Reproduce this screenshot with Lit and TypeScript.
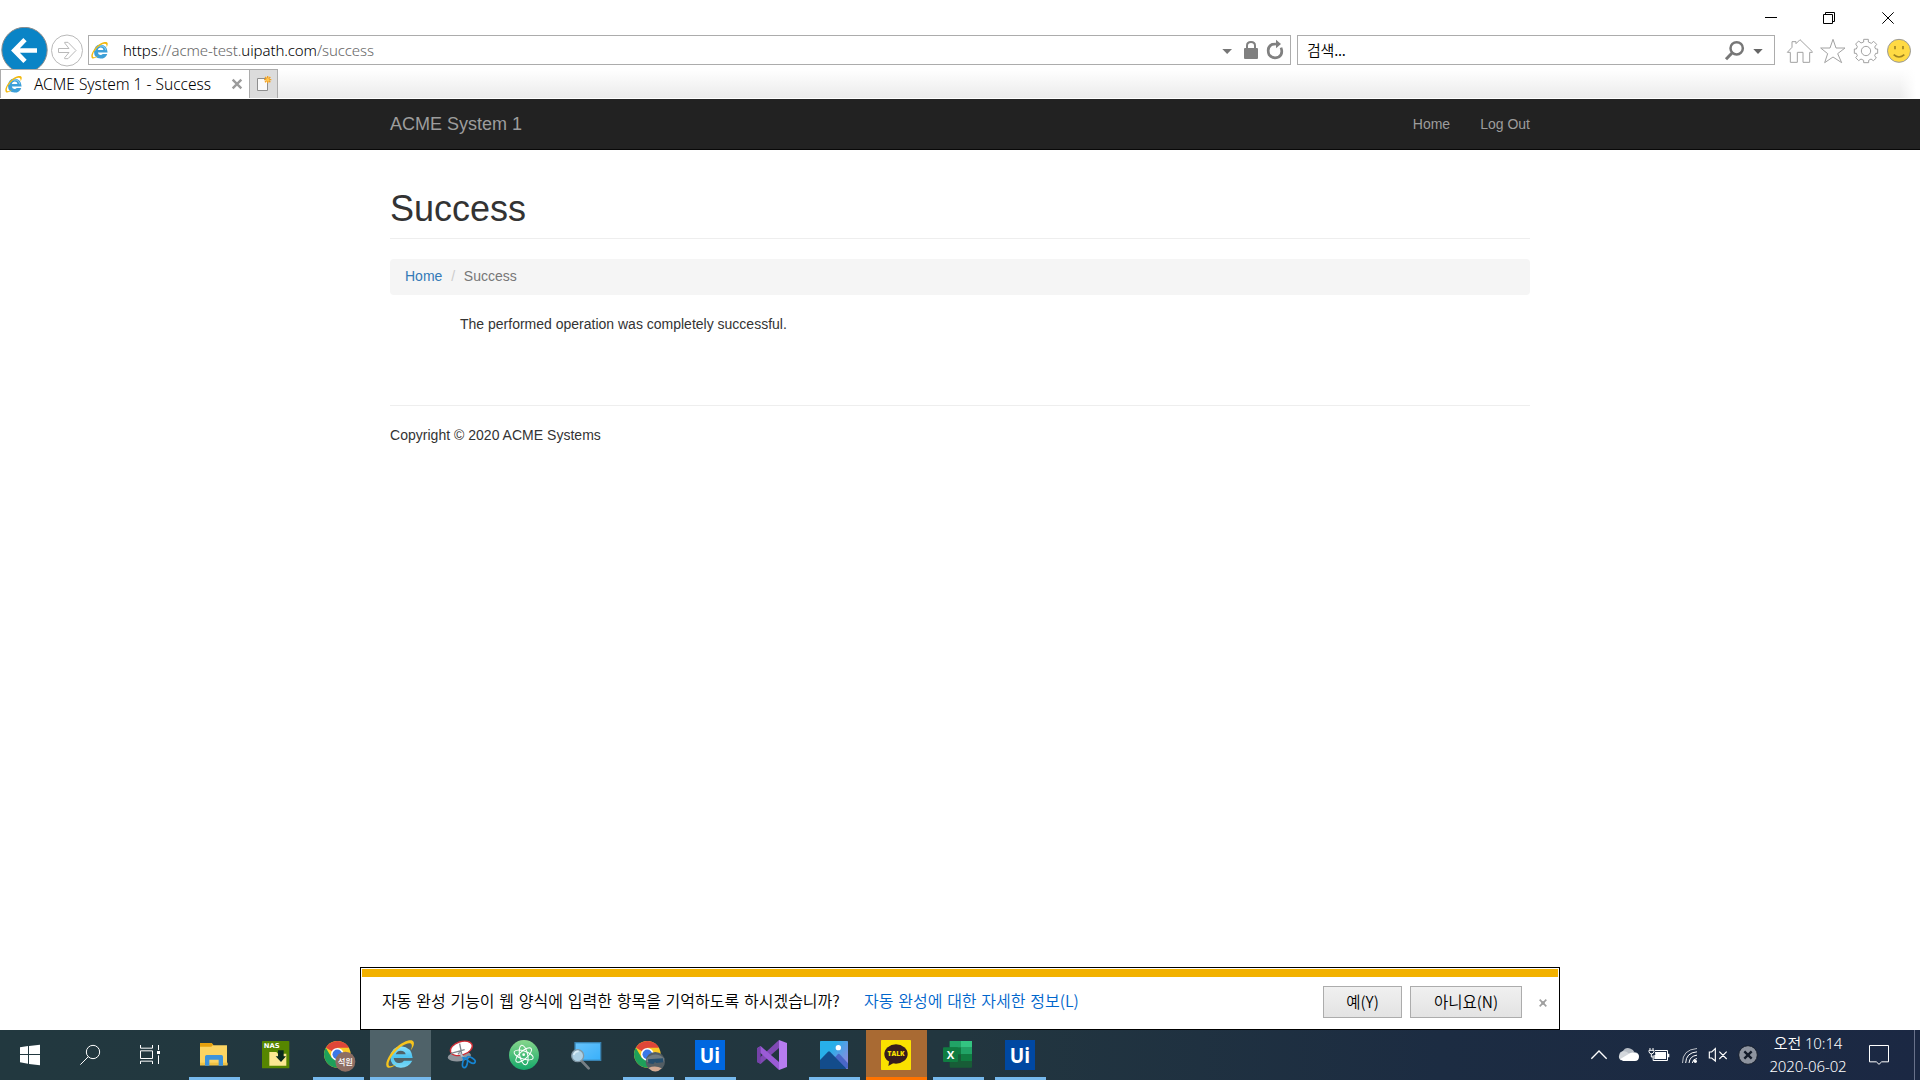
import { LitElement, html, svg, css, nothing } from "lit";
import { customElement } from "lit/decorators.js";

type Art = ReturnType<typeof svg>;

// Icons are drawn on a grid of three units per pixel.
const icon = (x: number, y: number, w: number, h: number, art: Art) => html`
  <svg width=${w} height=${h} viewBox="${x} ${y} ${w * 3} ${h * 3}">${art}</svg>`;

const ieArt = svg`
  <path d="M64 54H26Q29 70 43 69Q53 69 57 62H82Q70 84 46 83Q16 80 16 51Q18 21 48 19Q80 21 83 54Z M32 43H62Q60 32 47 32Q35 33 32 43Z" fill="url(#ieg)" fill-rule="evenodd"/>
  <path d="M9 83C-4 77 8 46 33 23C56 2 82 -5 86 6C89 14 83 24 77 31C82 20 82 11 75 10C65 8 45 20 31 35C15 52 6 73 13 78C18 80 28 76 36 71C26 80 15 85 9 83Z" fill="#f7c41d"/>`;

const ieSmall = html`
  <svg width="17" height="17" viewBox="0 0 90 90">
    <path d="M88 56H36Q38 69 50 69Q58 69 62 63H86Q78 88 50 88Q16 85 16 52Q18 15 50 13Q86 15 88 56Z M36 42H66Q64 29 51 29Q38 30 36 42Z" fill="#3c9fd8" fill-rule="evenodd"/>
    <path d="M22 45Q27 21 50 20Q72 21 79 43" fill="none" stroke="#8accf0" stroke-width="6"/>
    <path d="M7 87C-6 80 6 46 33 21C56 0 84 -7 88 6C90 14 87 22 82 29C84 18 82 9 74 9C64 8 45 18 29 34C13 51 5 74 12 79C17 82 28 79 38 73C26 84 15 89 7 87Z" fill="#f2b90f"/>
  </svg>`;

const chromeArt = svg`
  <circle cx="43" cy="43" r="40" fill="#fbc926"/>
  <path d="M43 43L9 23A40 40 0 0 1 78 23H43Z" fill="#df4639"/>
  <path d="M8.400 23A40 40 0 0 0 43 83L60 53L26 53Z" fill="#1ea05a"/>
  <circle cx="43" cy="43" r="19" fill="#fff"/><circle cx="43" cy="43" r="14.500" fill="#3b78e7"/>`;

const uiArt = (bg: string) => svg`
  <rect width="90" height="90" fill=${bg}/>
  <text x="14" y="69" class="ui-logo" textLength="61" lengthAdjust="spacingAndGlyphs">Ui</text>`;

interface Task { art: Art; state: "idle" | "open" | "active" | "alert"; }

const tasks: Task[] = [
  { state: "open", art: svg`
    <path d="M3 9H37L43 16H84V76H3Z" fill="#fcd462"/>
    <path d="M3 9H38L43 14L37 20H3Z" fill="#e5a00d"/>
    <path d="M3 68H86V76H3Z" fill="#f0c243"/>
    <path d="M18 77V50Q18 45 23 45H67Q72 45 72 50V77H59V59H31V77Z" fill="#3d93db"/>` },
  { state: "idle", art: svg`
    <rect x="3" y="3" width="82" height="82" rx="2" fill="#568600"/>
    <text x="8" y="24" class="nas" textLength="48" lengthAdjust="spacingAndGlyphs">NAS</text>
    <path d="M25 36H46L51 41H76V77H25Z" fill="#fce892"/>
    <path d="M51 31H68V49H75L60 66L44 49H51Z" fill="#0a2a1e"/>` },
  { state: "open", art: svg`${chromeArt}
    <circle cx="67" cy="65" r="30" fill="#8d6e63"/>
    <text x="67" y="75" class="avatar">석원</text>` },
  { state: "active", art: ieArt },
  { state: "idle", art: svg`
    <ellipse cx="37" cy="49" rx="35" ry="15" fill="#8f959c" transform="rotate(-6 37 49)"/>
    <ellipse cx="43" cy="25" rx="34" ry="20" fill="#fff" stroke="#cf2c35" stroke-width="4" transform="rotate(-18 43 25)"/>
    <path d="M12 40L53 29M38 11L46 52M43 30L33 43" stroke="#7e838a" stroke-width="4" fill="none"/>
    <path d="M37 38L49 53" stroke="#b9bec6" stroke-width="6"/>
    <ellipse cx="54" cy="69" rx="7" ry="14" fill="none" stroke="#1685d3" stroke-width="5" transform="rotate(12 54 69)"/>
    <ellipse cx="72" cy="60" rx="7" ry="14" fill="none" stroke="#1685d3" stroke-width="5" transform="rotate(-58 72 60)"/>
    <path d="M46 52L59 57M46 52L55 58" stroke="#1685d3" stroke-width="5"/>` },
  { state: "idle", art: svg`
    <circle cx="45" cy="45" r="45" fill="url(#atom)"/>
    <g fill="none" stroke="#fff" stroke-width="3">
      <ellipse cx="44" cy="45" rx="12" ry="30" transform="rotate(-12 44 45)"/>
      <ellipse cx="44" cy="45" rx="12" ry="30" transform="rotate(48 44 45)"/>
      <ellipse cx="44" cy="45" rx="12" ry="30" transform="rotate(108 44 45)"/>
    </g><circle cx="44" cy="44" r="4" fill="#fff"/>` },
  { state: "idle", art: svg`
    <rect x="12" y="8" width="77" height="53" fill="url(#screen)" stroke="#3983b2" stroke-width="4"/>
    <path d="M32 63L53 85" stroke="#777f85" stroke-width="8" stroke-linecap="round"/>
    <circle cx="20" cy="47" r="18" fill="#acd0e4" stroke="#8298a5" stroke-width="4"/>
    <path d="M8 45Q12 33 23 34" stroke="#d9edf7" stroke-width="5" fill="none"/>` },
  { state: "open", art: svg`${chromeArt}
    <circle cx="67" cy="65" r="29" fill="#535e64"/>
    <path d="M39 57Q67 31 94 56L91 66H42Z" fill="#717c82"/>
    <path d="M45 58L90 55L91 67L70 69L66 66L61 72L46 70Z" fill="#264e6d"/>
    <path d="M46 84Q67 75 86 85Q67 105 46 84Z" fill="#d2aa93"/>` },
  { state: "open", art: uiArt("#0067df") },
  { state: "idle", art: svg`
    <path d="M66 0L90 9V81L66 90Z" fill="#b77cf0"/>
    <path d="M66 0V24L11 72L0 66V61Z" fill="#8049b4"/>
    <path d="M0 25L11 18L66 66V90L0 29Z" fill="#9b5bd6"/>
    <path d="M0 25L11 18V72L0 66Z" fill="#7542a8"/>` },
  { state: "open", art: svg`
    <rect x="3" y="3" width="84" height="84" rx="2" fill="url(#sky)"/>
    <path d="M46 54L57 42Q59 40 62 43L87 70V85H46Z" fill="#4966c7"/>
    <path d="M3 60L27 35Q30 32 33 35L83 87H3Z" fill="#134c8b"/>
    <circle cx="58" cy="23" r="8" fill="#fff"/>` },
  { state: "alert", art: svg`
    <rect width="90" height="90" rx="2" fill="#fae100"/>
    <ellipse cx="45" cy="42" rx="35" ry="29" fill="#371d1e"/>
    <path d="M25 60L22 78L43 66Z" fill="#371d1e"/>
    <text x="45" y="49" class="talk" textLength="51" lengthAdjust="spacingAndGlyphs">TALK</text>` },
  { state: "open", art: svg`
    <rect x="20" y="3" width="67" height="80" rx="3" fill="#185c37"/>
    <path d="M20 3H54V23H20Z" fill="#21a366"/><path d="M54 3H87V23H54Z" fill="#33c481"/>
    <path d="M20 23H54V43H20Z" fill="#107c41"/><path d="M54 23H87V43H54Z" fill="#21a366"/>
    <path d="M54 43H87V63H54Z" fill="#107c41"/>
    <rect x="0" y="22" width="45" height="44" rx="3" fill="#107c41"/>
    <text x="22.500" y="56" class="excel">X</text>` },
  { state: "open", art: uiArt("#0048a2") },
];

const shellFont = css`"Noto Sans", "Noto Sans CJK KR", sans-serif`;

@customElement("browser-chrome")
class BrowserChrome extends LitElement {
  static styles = css`
    :host { display: block; height: 99px; background: #fff; font: 350 15px ${shellFont}; color: #000; }
    svg { display: block; flex: none; }
    .title { height: 27px; display: flex; justify-content: flex-end; }
    .nav { height: 42px; display: flex; overflow: hidden; }
    .box { box-sizing: border-box; height: 30px; margin-top: 8px; border: 1px solid #acacac; display: flex; align-items: center; }
    .address { width: 1203px; padding-left: 2px; }
    .url { flex: 1; margin-left: 15px; color: #666; font-size: 15px; letter-spacing: -0.1px; line-height: 28px; white-space: nowrap; }
    .url b { font-weight: 350; color: #000; }
    .search { width: 478px; margin-left: 6px; padding-left: 9px; }
    .hint { flex: 1; font: 350 15px/28px "Noto Sans CJK KR", sans-serif; letter-spacing: -0.2px; }
    .tabs { height: 29px; display: flex; background: linear-gradient(#fff, #ebebeb); }
    .fade { margin-left: auto; width: 20px; background: linear-gradient(90deg, #fff0, #fff 80%); }
    .tab { box-sizing: border-box; width: 250px; border: 1px solid #acacac; border-bottom: 0; background: #fff; display: flex; align-items: center; padding-left: 4px; }
    .name { flex: 1; margin-left: 12px; font-size: 15.5px; letter-spacing: 0; white-space: nowrap; }
    .new { box-sizing: border-box; width: 28px; border: 1px solid #acacac; border-left: 0; border-bottom: 0; background: #dcdcdc; }
  `;
  render() {
    return html`
      <div class="title">${icon(600, 0, 160, 27, svg`
        <g fill="none" stroke="#000" stroke-width="3">
          <path d="M615 52.500H651M790.500 43.500H817.500V70.500H790.500ZM796.500 43V37.500H823.500V64.500H818"/>
          <path d="M967 37L1001 71M1001 37L967 71"/></g>`)}</div>
      <div class="nav">
        ${icon(0, 81, 50, 42, svg`
          <circle cx="73.500" cy="150" r="68" fill="#0a84c6" stroke="#8b8b8b" stroke-width="3"/>
          <path d="M111 151.500H44M75 119L43 151.500L75 184" fill="none" stroke="#fff" stroke-width="14"/>`)}
        ${icon(150, 81, 38, 42, svg`
          <g fill="#fff" stroke="#b9b9b9" stroke-width="3"><circle cx="201" cy="151.500" r="46.500"/>
          <path d="M175.500 145.500H207L194 129V127H204L228 151.500L204 176H194V173L207 157.500H175.500Z"/></g>`)}
        <div class="box address">${ieSmall}
          <span class="url"><b>https</b>://acme-test.<b>uipath.com</b>/success</span>
          ${icon(60, 108, 70, 28, svg`
            <path d="M67 147H96L81.500 162Z" fill="#767676"/>
            <rect x="132" y="144" width="42" height="33" rx="3" fill="#808080"/>
            <path d="M141 146V137Q141 126 153 126T165 137V146" fill="none" stroke="#808080" stroke-width="6"/>
            <path d="M243 143Q250 163 236 171Q218 178 207 164Q199 141 217 133L228 132" fill="none" stroke="#808080" stroke-width="8"/>
            <path d="M228 119L243 132L228 145Z" fill="#808080"/>`)}
        </div>
        <div class="box search"><span class="hint">검색...</span>
          ${icon(492, 108, 50, 28, svg`
            <circle cx="530" cy="145" r="18.500" fill="none" stroke="#777" stroke-width="7.500"/>
            <path d="M516 159L498 178" stroke="#777" stroke-width="9"/>
            <path d="M580 147H608L594 162Z" fill="#666"/>`)}
        </div>
        ${icon(645, 81, 145, 42, svg`
          <g fill="#fff" stroke="#a2a2a2" stroke-width="3" stroke-linejoin="round">
            <path d="M682 157L696 142V125H708V131L720 119L757 155V157H749V187H729V157H712V187H691V157Z"/>
            <path d="M819 118L828 144H855L833 161L845 188L819 171L794 188L803 161L782 144H810Z"/>
            <path d="M911 118H925V126L934 130L941 124L950 133L944 141L947 147H953V160H947L944 167L949 174L940 182L933 177L926 181V188H911V181L903 177L896 182L887 173L892 167L889 160H883V147H889L892 140L887 132L896 123L903 129L911 126Z"/>
            <circle cx="918" cy="153" r="14"/>
            <circle cx="1017" cy="152.500" r="34.500" fill="#ffda44" stroke="#999"/>
          </g>
          <path d="M1001 164Q1017 178 1033 164" fill="none" stroke="#a08422" stroke-width="5"/>
          <path d="M1005 138V148M1029 138V148" stroke="#a08422" stroke-width="5"/>`)}
      </div>
      <div class="tabs">
        <div class="tab">${ieSmall}<span class="name">ACME System 1 - Success</span>
          ${icon(687, 210, 20, 28, svg`<path d="M698 239L724 265M724 239L698 265" stroke="#9b9b9b" stroke-width="7"/>`)}
        </div>
        <div class="new">${icon(750, 210, 27, 28, svg`
          <path d="M772.500 235.500H802.500V271.500H772.500Z" fill="#fafafa" stroke="#8e8e8e" stroke-width="3"/>
          <path d="M803 228V250M792 239H814M795 231L811 247M811 231L795 247" stroke="#f4a11f" stroke-width="4"/>
          <circle cx="803" cy="239" r="5" fill="#ffc64d"/>`)}</div>
        <div class="fade"></div>
      </div>`;
  }
}

@customElement("site-page")
class SitePage extends LitElement {
  static styles = css`
    :host { display: block; flex: 1; background: #fff; color: #333; font: 14px/20px "Liberation Sans", Arial, sans-serif; }
    .navbar { height: 50px; background: #222; border-bottom: 1px solid #080808; color: #9d9d9d; }
    .wrap { width: 1140px; margin: 0 auto; }
    .bar { display: flex; padding-top: 15px; gap: 30px; }
    .brand { font-size: 18px; margin-right: auto; }
    h1 { margin: 39px 0 0; height: 40px; padding-bottom: 9px; border-bottom: 1px solid #eee; font-size: 36px; line-height: 39.6px; font-weight: 400; }
    .crumbs { display: flex; height: 20px; margin-top: 20px; padding: 7px 15px 9px; background: #f5f5f5; border-radius: 4px; color: #777; }
    .crumbs a { color: #337ab7; }
    .sep { color: #ccc; width: 21.5px; text-align: center; }
    .msg { margin: 19px 0 0 70px; height: 91px; }
    .foot { border-top: 1px solid #eee; padding-top: 19px; letter-spacing: 0.02px; }
  `;
  render() {
    return html`
      <div class="navbar"><div class="wrap bar"><span class="brand">ACME System 1</span><span>Home</span><span>Log Out</span></div></div>
      <div class="wrap">
        <h1>Success</h1>
        <div class="crumbs"><a>Home</a><span class="sep">/</span><span>Success</span></div>
        <div class="msg">The performed operation was completely successful.</div>
        <div class="foot">Copyright © 2020 ACME Systems</div>
      </div>`;
  }
}

@customElement("autofill-bar")
class AutofillBar extends LitElement {
  static styles = css`
    :host { display: block; box-sizing: border-box; width: 1200px; height: 63px; margin: 0 auto; padding: 1px; border: 1px solid #000; background: #fff; font: 350 16px "Noto Sans CJK KR", sans-serif; color: #000; }
    .stripe { height: 8px; background: #f2b100; }
    .row { display: flex; align-items: center; height: 50px; padding-left: 20px; white-space: nowrap; word-spacing: 1.2px; }
    .question { width: 482px; padding-bottom: 4px; }
    .link { flex: 1; color: #0066cc; padding-bottom: 4px; }
    .btn { box-sizing: border-box; height: 32px; border: 1px solid #acacac; background: linear-gradient(#f0f0f0, #e3e3e3); text-align: center; font-size: 15.5px; line-height: 29px; margin-right: 8px; }
    .yes { width: 79px; }
    .no { width: 112px; }
    svg { display: block; margin: 2px 11px 0 9px; }
  `;
  render() {
    return html`
      <div class="stripe"></div>
      <div class="row">
        <span class="question">자동 완성 기능이 웹 양식에 입력한 항목을 기억하도록 하시겠습니까?</span>
        <span class="link">자동 완성에 대한 자세한 정보(L)</span>
        <span class="btn yes">예(Y)</span><span class="btn no">아니요(N)</span>
        ${icon(0, -3, 8, 10, svg`<path d="M2 2L22 22M22 2L2 22" stroke="#a0a0a0" stroke-width="5"/><rect x="7" y="7" width="10" height="10" fill="#a0a0a0"/>`)}
      </div>`;
  }
}

@customElement("task-bar")
class TaskBar extends LitElement {
  static styles = css`
    :host { display: flex; height: 50px; background: linear-gradient(90deg, #22383f 0%, #22363f 50%, #1c2c42 75%, #1b2843 100%); color: #fff; font: 15px ${shellFont}; }
    svg { display: block; flex: none; }
    .apps { display: flex; gap: 1px; }
    .app { box-sizing: border-box; width: 61px; height: 50px; padding: 10px 0 0 15px; display: flex; flex-direction: column; justify-content: space-between; }
    .app svg { overflow: visible; }
    .line { height: 3px; width: 51px; margin-left: -10px; background: #76b9ed; }
    .active { background: #4f6269; }
    .active .line, .alert .line { width: 61px; margin-left: -15px; }
    .alert { background: #a96a33; }
    .alert .line { background: #ff7300; }
    .tray { display: flex; margin-left: auto; }
    .clock { width: 90px; text-align: center; line-height: 23px; padding-top: 2px; white-space: nowrap; font-weight: 350; letter-spacing: -0.1px; }
    .ui-logo { font: 700 63px "Open Sans", sans-serif; fill: #fff; }
    .nas { font: 700 20px "DejaVu Sans", sans-serif; fill: #fff; }
    .avatar { font: 500 25px "Noto Sans CJK KR", sans-serif; fill: #fff; text-anchor: middle; }
    .talk { font: 800 21px "Open Sans", sans-serif; fill: #fae100; text-anchor: middle; }
    .excel { font: 700 34px "Open Sans", sans-serif; fill: #fff; text-anchor: middle; }
  `;
  render() {
    return html`
      ${icon(0, 30, 184, 50, svg`
        <path d="M60 82L84 78V102H60ZM87 78L120 74V102H87ZM60 105H84V131L60 127ZM87 105H120V136L87 132Z" fill="#fff"/>
        <g fill="none" stroke="#fff" stroke-width="3">
          <circle cx="279" cy="96" r="20"/><path d="M265 110L241 134"/>
          <path d="M421.500 75V84.500H457.500V75M421.500 132V123.500H457.500V132M421.500 92.500H457.500V115.500H421.500ZM475.500 75V90M475.500 106V132"/>
        </g><rect x="471" y="93" width="9" height="9" fill="#fff"/>`)}
      <div class="apps">${tasks.map(t => html`
        <div class="app ${t.state}">
          <svg width="30" height="30" viewBox="0 0 90 90">
            <defs>
              <linearGradient id="ieg" x2="0" y2="1"><stop stop-color="#8be0fb"/><stop offset=".5" stop-color="#4cc3f1"/><stop offset="1" stop-color="#7cdaf8"/></linearGradient>
              <linearGradient id="atom" x2="0" y2="1"><stop stop-color="#87d68c"/><stop offset="1" stop-color="#14a869"/></linearGradient>
              <linearGradient id="screen" x2="1" y2="1"><stop stop-color="#68c3fb"/><stop offset="1" stop-color="#38b0fb"/></linearGradient>
              <linearGradient id="sky" x2="1" y2=".7"><stop offset=".4" stop-color="#28afe9"/><stop offset="1" stop-color="#8b8be0"/></linearGradient>
            </defs>${t.art}</svg>
          ${t.state === "idle" ? nothing : html`<div class="line"></div>`}
        </div>`)}</div>
      <div class="tray">
        ${icon(72, 30, 30, 50, svg`<path d="M94 116L117 93L140 116" fill="none" stroke="#fff" stroke-width="4"/>`)}
        ${icon(162, 30, 30, 50, svg`
          <path d="M180 111Q174 98 188 94Q197 79 212 86Q220 88 223 96Q237 98 236 111Z" fill="#b6bcc4"/>
          <path d="M188 94Q198 92 205 99L220 106L182 121Q174 113 178 105Q181 97 188 94Z" fill="#d3d7dc"/>
          <path d="M181 117L211 99Q218 96 224 99Q237 98 237 111Q236 123 225 123H190Q184 122 181 117Z" fill="#fff"/>`)}
        ${icon(252, 30, 31, 50, svg`
          <path d="M285 91.500H322.500V121.500H279.500V106" fill="none" stroke="#fff" stroke-width="3"/>
          <path d="M285 96H318V117H283V105H286ZM324 101H328V112H324Z" fill="#fff"/>
          <path d="M270 84V91M279 84V91M267 91H282V95Q281 101 274 102Q268 101 267 95ZM274 101V111H280" fill="none" stroke="#fff" stroke-width="3"/>`)}
        ${icon(345, 30, 28, 50, svg`
          <g fill="none" stroke="#fff" stroke-width="3">
            <path d="M367.500 129Q367 89 411 85.500" opacity=".7"/><path d="M377 129Q378 98 411 95.500"/><path d="M387 129Q389 108 411 105.500"/><path d="M397 129Q398 117 411 115.500"/>
          </g><circle cx="406" cy="124" r="5" fill="#fff"/>`)}
        ${icon(429, 30, 30, 50, svg`
          <path d="M448 96H455L466 86V123L455 114H448ZM478 95L500 117M500 95L478 117" fill="none" stroke="#fff" stroke-width="3.500"/>`)}
        ${icon(519, 30, 30, 50, svg`
          <circle cx="564" cy="105" r="28" fill="#8e949f" stroke="#151d2b" stroke-width="3"/>
          <path d="M553 94L575 116M575 94L553 116" stroke="#131b29" stroke-width="7"/>`)}
        <div class="clock">오전 10:14<br>2020-06-02</div>
        ${icon(879, 30, 67, 50, svg`
          <path d="M928.500 76.500H985.500V125.500H965L957 133L949 125.500H928.500Z" fill="none" stroke="#fff" stroke-width="3"/>
          <path d="M1063.500 30V180" stroke="#68718a" stroke-width="3"/>`)}
      </div>`;
  }
}

@customElement("app-root")
class AppRoot extends LitElement {
  static styles = css`
    :host { display: flex; flex-direction: column; width: 1920px; height: 1080px; overflow: hidden; background: #fff; }
  `;
  render() {
    return html`
      <browser-chrome></browser-chrome>
      <site-page></site-page>
      <autofill-bar></autofill-bar>
      <task-bar></task-bar>`;
  }
}
